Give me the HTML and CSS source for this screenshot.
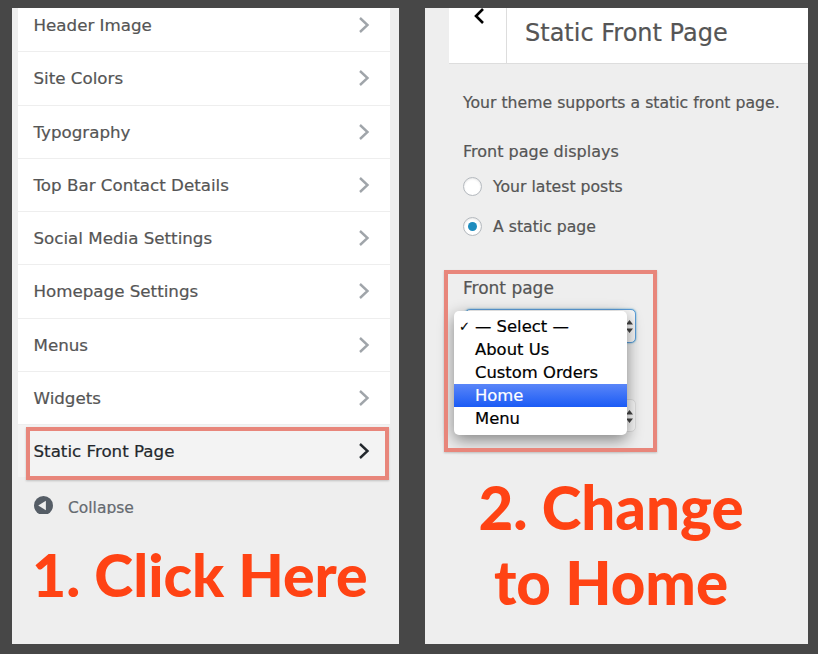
FILE: index.html
```html
<!DOCTYPE html>
<html lang="en">
<head>
  <meta charset="UTF-8"/>
  <title>Static Front Page</title>
  <link rel="stylesheet" href="styles.css">
</head>
<body>
  <div class="panel left">
    <ul class="menu">
      <li>Header Image<svg class="chev" viewBox="0 0 12 18"><path d="M2 2l7.5 7L2 16"/></svg></li>
      <li>Site Colors<svg class="chev" viewBox="0 0 12 18"><path d="M2 2l7.5 7L2 16"/></svg></li>
      <li>Typography<svg class="chev" viewBox="0 0 12 18"><path d="M2 2l7.5 7L2 16"/></svg></li>
      <li>Top Bar Contact Details<svg class="chev" viewBox="0 0 12 18"><path d="M2 2l7.5 7L2 16"/></svg></li>
      <li>Social Media Settings<svg class="chev" viewBox="0 0 12 18"><path d="M2 2l7.5 7L2 16"/></svg></li>
      <li>Homepage Settings<svg class="chev" viewBox="0 0 12 18"><path d="M2 2l7.5 7L2 16"/></svg></li>
      <li>Menus<svg class="chev" viewBox="0 0 12 18"><path d="M2 2l7.5 7L2 16"/></svg></li>
      <li>Widgets<svg class="chev" viewBox="0 0 12 18"><path d="M2 2l7.5 7L2 16"/></svg></li>
      <li class="active">Static Front Page<svg class="chev" viewBox="0 0 12 18"><path d="M2 2l7.5 7L2 16"/></svg></li>
    </ul>
    <div class="mark mark-row"></div>
    <div class="collapse">
      <svg class="collapse-icon" viewBox="0 0 20 20"><circle cx="10" cy="10" r="10"/><path class="tri" d="M4.5 10L12.5 5v10z"/></svg>
      <span>Collapse</span>
    </div>
    <h2 class="step one">1. Click Here</h2>
  </div>

  <div class="panel right">
    <div class="head">
      <div class="back"><svg viewBox="0 0 12 18"><path d="M10 1L3 8l7 7"/></svg></div>
      <div class="title">Static Front Page</div>
    </div>
    <div class="body">
      <p class="desc">Your theme supports a static front page.</p>
      <div class="label">Front page displays</div>
      <div class="radio"><span class="dot"></span>Your latest posts</div>
      <div class="radio"><span class="dot on"></span>A static page</div>
      <div class="label front">Front page</div>
      <div class="select first"><span class="arrows"></span></div>
      <div class="select second"><span class="arrows"></span></div>
      <div class="popup">
        <div class="opt"><span class="tick">✓</span>— Select —</div>
        <div class="opt">About Us</div>
        <div class="opt">Custom Orders</div>
        <div class="opt sel">Home</div>
        <div class="opt">Menu</div>
      </div>
      <div class="mark mark-select"></div>
    </div>
    <h2 class="step two">2. Change<br>to Home</h2>
  </div>
</body>
</html>
```

FILE: styles.css
```css
* { box-sizing: border-box; }
html, body { height: 100%; }
body { margin: 0; background: #474747; display: flex; gap: 26px; padding: 8px 10px 10px 12px; height: 654px; overflow: hidden; font-family: "DejaVu Sans", sans-serif; color: #555; -webkit-text-stroke: .2px; }

.panel { background: #eeeeee; height: 636px; position: relative; overflow: hidden; }
.left { width: 387px; }
.right { width: 383px; }

.menu { list-style: none; margin: -9px 0 0 6px; padding: 0; width: 372px; }
.menu li { height: 53.25px; background: #fff; border-bottom: 1px solid #eeeeee; padding: 0 20px 0 15.5px; display: flex; align-items: center; justify-content: space-between; font-size: 16.7px; }
.menu li.active { background: #f3f3f3; color: #23282d; }
.chev { width: 12px; height: 18px; fill: none; stroke: #a0a5aa; stroke-width: 2.4; }
.active .chev { stroke: #23282d; }

.mark { position: absolute; border: 4px solid #e8867b; box-shadow: 0 1px 2px rgba(0,0,0,.2); }
.mark-row { left: 14px; top: 419px; width: 363px; height: 53px; }

.collapse { margin: 18px 0 0 22px; height: 18px; overflow: hidden; display: flex; gap: 15px; font-size: 15.5px; color: #656a70; line-height: 20px; }
.collapse span { margin-top: 2px; }
.collapse-icon { width: 19px; height: 19px; flex: none; fill: #555d66; }
.collapse-icon .tri { fill: #eee; }

.step { margin: 0; font-family: Lato, sans-serif; font-weight: 900; color: #ff4314; font-size: 60px; line-height: 75px; -webkit-text-stroke: 0; }
.one { margin: 23px 0 0 20px; font-size: 59px; }
.two { position: absolute; left: 0; right: 0; top: 462px; width: 372px; text-align: center; }

.head { margin-left: 24px; height: 56px; background: #fff; border-bottom: 1px solid #ddd; display: flex; }
.back { width: 58px; border-right: 1px solid #ddd; padding: 0 0 0 24px; }
.back svg { width: 12px; height: 18px; fill: none; stroke: #000; stroke-width: 2.6; }
.title { font-size: 24px; padding: 10px 0 0 18px; line-height: 30px; }

.body { padding: 29px 0 0 38px; font-size: 15.7px; position: relative; }
.desc { margin: 0; line-height: 20px; }
.label { margin-top: 29px; font-size: 16px; line-height: 20px; }
.radio { display: flex; align-items: center; gap: 11px; height: 20px; margin-top: 14px; }
.radio + .radio { margin-top: 20px; }
.dot { width: 19px; height: 19px; border-radius: 50%; background: #fff; border: 1px solid #b4b9be; box-shadow: inset 0 1px 2px rgba(0,0,0,.1); position: relative; }
.dot.on::after { content: ""; position: absolute; left: 4px; top: 4px; width: 9px; height: 9px; border-radius: 50%; background: #1e8cbe; }
.label.front { margin-top: 42px; font-size: 17px; }

.select { position: absolute; left: 40px; width: 171px; height: 34px; background: #f7f7f7; border-radius: 5px; border: 1px solid #ddd; }
.select.first { top: 245px; border-color: #5b9dd9; box-shadow: 0 0 2px rgba(30,140,190,.8); }
.select.second { top: 335px; height: 33px; }
.arrows { position: absolute; right: 2px; top: 10px; width: 7px; height: 13px; background: #444; clip-path: polygon(50% 0, 100% 35%, 0 35%, 50% 0, 50% 100%, 0 65%, 100% 65%, 50% 100%); }

.popup { position: absolute; left: 29px; top: 247px; width: 173px; padding: 4px 0 5px; background: #fff; border-radius: 5px; box-shadow: 0 5px 16px rgba(0,0,0,.45); color: #000; font-size: 16.4px; }
.opt { height: 23px; line-height: 23px; padding-left: 21px; position: relative; }
.opt.sel { background: linear-gradient(#5a86f8, #1b5bf5); color: #fff; }
.tick { position: absolute; left: 5px; font-size: 13px; font-weight: 700; }

.mark-select { left: 19px; top: 206px; width: 213px; height: 182px; }
```
